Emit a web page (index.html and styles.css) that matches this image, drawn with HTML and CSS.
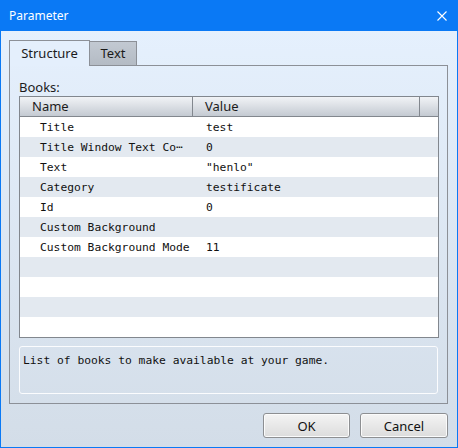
FILE: index.html
```html
<!DOCTYPE html>
<html lang="en">
<head>
    <meta charset="UTF-8">
    <title>Parameter</title>
    <link rel="stylesheet" href="styles.css">
</head>
<body>
    <div class="window">
        <div class="titlebar">
            <span class="title">Parameter</span>
            <svg class="close" width="10" height="10" viewBox="0 0 10 10">
                <path d="M0.5 0.5 L9.5 9.5 M9.5 0.5 L0.5 9.5" stroke="#fff" stroke-width="1.1" fill="none"/>
            </svg>
        </div>
        <div class="client">
            <div class="tabs">
                <div class="tab_item active">Structure</div>
                <div class="tab_item">Text</div>
            </div>
            <div class="panel">
                <div class="label">Books:</div>
                <div class="grid">
                    <div class="grid_head">
                        <div class="col_name">Name</div>
                        <div class="col_value">Value</div>
                        <div class="col_fill"></div>
                    </div>
                    <div class="row"><div class="col_name">Title</div><div class="col_value">test</div></div>
                    <div class="row"><div class="col_name">Title Window Text Co&#x22EF;</div><div class="col_value">0</div></div>
                    <div class="row"><div class="col_name">Text</div><div class="col_value">"henlo"</div></div>
                    <div class="row"><div class="col_name">Category</div><div class="col_value">testificate</div></div>
                    <div class="row"><div class="col_name">Id</div><div class="col_value">0</div></div>
                    <div class="row"><div class="col_name">Custom Background</div><div class="col_value"></div></div>
                    <div class="row"><div class="col_name">Custom Background Mode</div><div class="col_value">11</div></div>
                    <div class="row"></div>
                    <div class="row"></div>
                    <div class="row"></div>
                    <div class="row"></div>
                </div>
                <div class="description">List of books to make available at your game.</div>
            </div>
            <div class="buttons">
                <button class="btn ok">OK</button>
                <button class="btn">Cancel</button>
            </div>
        </div>
    </div>
</body>
</html>
```
FILE: styles.css
```css
body {
    margin: 0;
    font-family: "Noto Sans", "Open Sans", sans-serif;
    font-size: 13px;
    color: #1b1b1b;
}

.window {
    width: 458px;
    height: 448px;
    display: flex;
    flex-direction: column;
}

/* タイトルバー */
.titlebar {
    height: 31px;
    flex: none;
    background-color: #0a79f5;
    color: #fff;
    display: flex;
    align-items: center;
    justify-content: space-between;
    padding: 0 11px 0 9px;
    font-size: 12px;
}
.titlebar .close {
    display: block;
}

.client {
    flex: 1;
    border: 1px solid #0a79f5;
    border-top: none;
    background: linear-gradient(#e5f0fd, #d3dde8);
    padding: 9px 9px 0 8px;
    display: flex;
    flex-direction: column;
}

/* タブ */
.tabs {
    display: flex;
    align-items: flex-end;
    height: 25px;
}
.tab_item {
    width: 47px;
    height: 24px;
    line-height: 23px;
    box-sizing: border-box;
    border: 1px solid #8c9097;
    border-bottom: none;
    border-left: none;
    background: linear-gradient(#c2c9d2, #b4bbc4);
    text-align: center;
    font-size: 13px;
}
.tab_item.active {
    position: relative;
    z-index: 1;
    width: 81px;
    height: 26px;
    line-height: 25px;
    margin-bottom: -1px;
    border-left: 1px solid #8c9097;
    background: #e4effc;
}

/* パネル */
.panel {
    height: 339px;
    box-sizing: border-box;
    border: 1px solid #8c9097;
    padding: 12px 9px 9px 9px;
    display: flex;
    flex-direction: column;
}
.label {
    height: 18px;
    line-height: 19px;
}

.grid {
    width: 420px;
    height: 242px;
    box-sizing: border-box;
    border: 1px solid #82878e;
    background-color: #fff;
}
.grid_head {
    display: flex;
    height: 20px;
    box-sizing: border-box;
    border-bottom: 1px solid #82878e;
    background: linear-gradient(#f1f3f6, #c4cad2);
    line-height: 19px;
}
.grid_head .col_name {
    width: 173px;
    border-right: 1px solid #82878e;
    padding-left: 12px;
    box-sizing: border-box;
}
.grid_head .col_value {
    width: 227px;
    border-right: 1px solid #82878e;
    padding-left: 12px;
    box-sizing: border-box;
}
.grid_head .col_fill {
    flex: 1;
}

.row {
    display: flex;
    height: 20px;
    line-height: 21px;
    font-family: "DejaVu Sans Mono", monospace;
    font-size: 11.3px;
    color: #111;
}
.row:nth-child(odd) {
    background-color: #e3e9f0;
}
.row .col_name {
    width: 174px;
    padding-left: 20px;
    box-sizing: border-box;
    white-space: nowrap;
    overflow: hidden;
}
.row .col_value {
    padding-left: 12px;
}

.description {
    margin-top: 8px;
    height: 48px;
    box-sizing: border-box;
    border: 1px solid #fbfcfe;
    border-radius: 3px;
    padding: 6px 3px 4px;
    line-height: 16px;
    font-family: "DejaVu Sans Mono", monospace;
    font-size: 11.3px;
    color: #111;
}

/* ボタン */
.buttons {
    display: flex;
    justify-content: flex-end;
    gap: 10px;
    margin-top: 9px;
}
.btn {
    width: 88px;
    height: 25px;
    border: 1px solid #8d8f92;
    border-radius: 3px;
    background: linear-gradient(#f4f4f4, #dcdcdc);
    box-shadow: inset 0 0 0 1px #fbfbfb;
    font-family: "Noto Sans", "Open Sans", sans-serif;
    font-size: 13px;
    color: #111;
    padding: 0;
}
.btn.ok {
    width: 87px;
}
```
